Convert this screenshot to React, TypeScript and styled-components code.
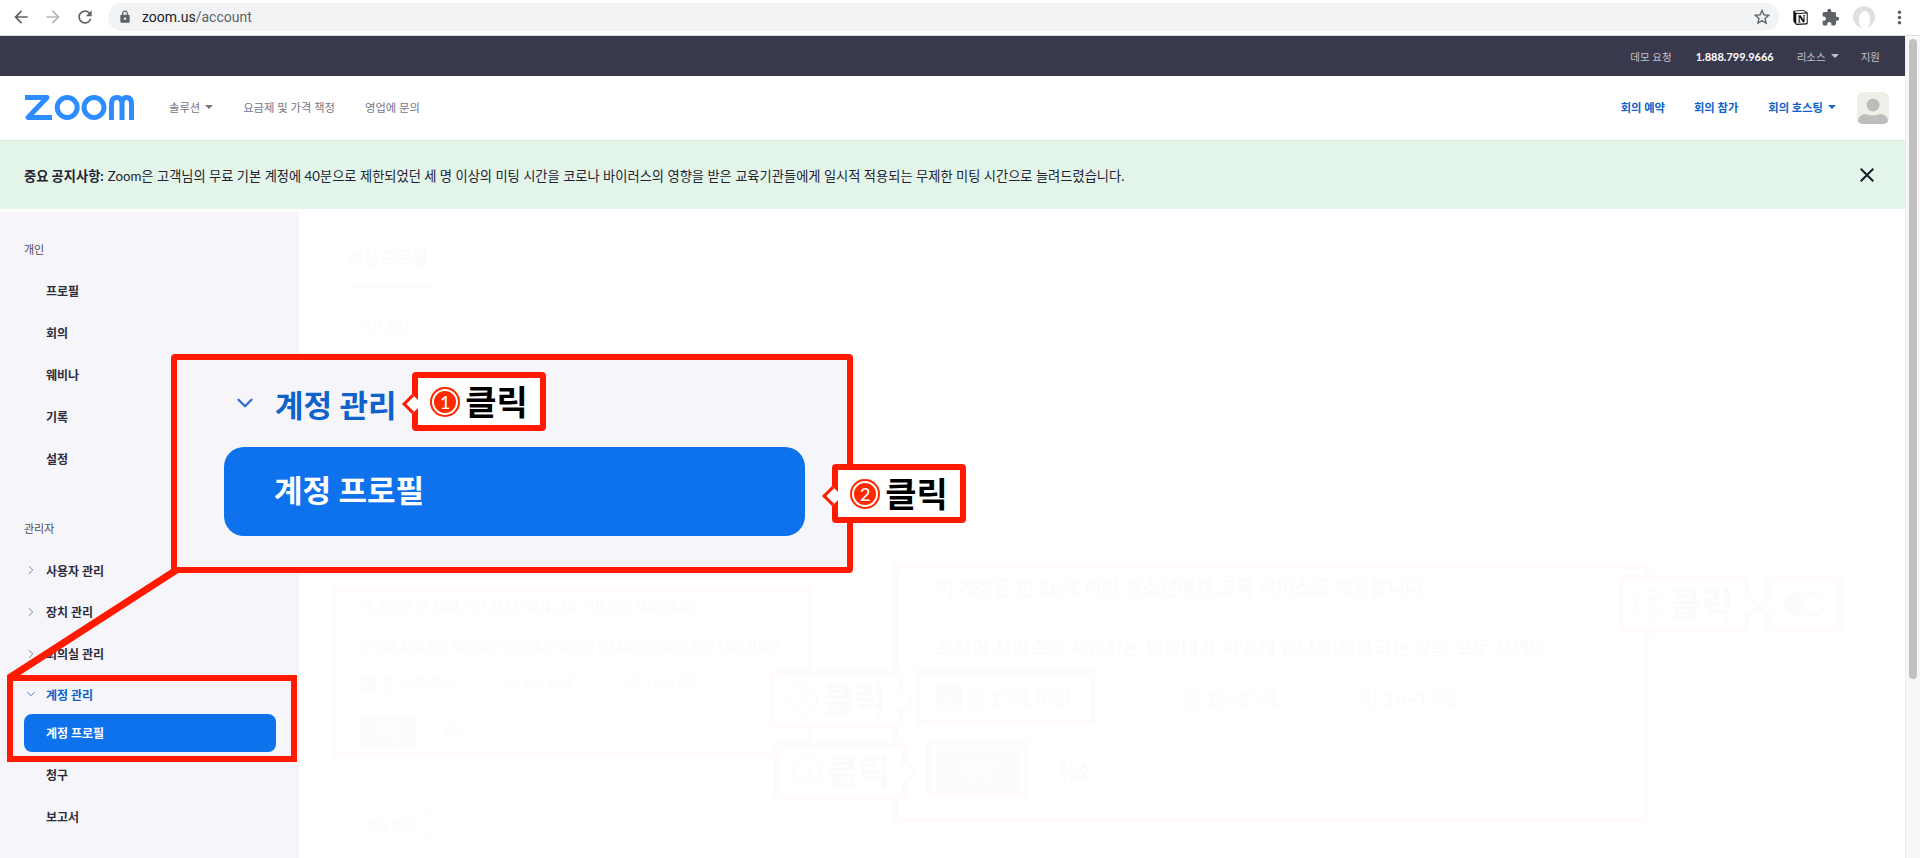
import { ReactNode } from 'react';
import styled, { createGlobalStyle } from 'styled-components';
import {
  MdArrowBack,
  MdArrowForward,
  MdRefresh,
  MdLock,
  MdStarBorder,
  MdExtension,
  MdMoreVert,
  MdClose,
  MdCheck,
} from 'react-icons/md';
import { SiNotion } from 'react-icons/si';
import { ChevronDown, ChevronRight } from 'lucide-react';

const RED = '#ff1a00';
const FADED_RED = '#fffbfa';
const FADED_TEXT = '#fbfbfb';
const FONT = 'Lato, "Noto Sans CJK KR", sans-serif';

const GlobalStyle = createGlobalStyle`
  html, body {
    margin: 0;
    padding: 0;
    background: #fff;
    overflow: hidden;
  }
  * {
    box-sizing: border-box;
  }
`;

const Screen = styled.div`
  position: relative;
  width: 1920px;
  height: 858px;
  overflow: hidden;
  font-family: ${FONT};
  color: #232333;
`;

/* browser chrome */
const BrowserBar = styled.div`
  display: flex;
  align-items: center;
  height: 36px;
  padding: 0 0 1px 11px;
  background: #fff;
  border-bottom: 1px solid #dadce0;
`;

const ToolButton = styled.span<{ $muted?: boolean }>`
  display: flex;
  width: 20px;
  height: 20px;
  margin-right: 12px;
  font-size: 20px;
  color: ${({ $muted }) => ($muted ? '#b4b6b9' : '#5f6368')};
`;

const UrlBar = styled.div`
  flex: 1;
  display: flex;
  align-items: center;
  height: 28px;
  margin-left: 1px;
  padding: 0 7px 0 10px;
  border-radius: 14px;
  background: #f1f3f4;
  font-family: Roboto, sans-serif;
  font-size: 14px;
  color: #5f6368;

  b {
    font-weight: 400;
    color: #202124;
  }
`;

const LockIcon = styled(MdLock)`
  font-size: 14px;
  margin-right: 10px;
  color: #5f6368;
`;

const StarIcon = styled(MdStarBorder)`
  margin-left: auto;
  font-size: 20px;
  color: #5f6368;
`;

const Extensions = styled.div`
  display: flex;
  align-items: center;
  gap: 13px;
  width: 141px;
  padding-left: 14px;
  color: #5f6368;
`;

const NotionIcon = styled(SiNotion)`
  font-size: 15px;
  color: #111;
`;

const PuzzleIcon = styled(MdExtension)`
  font-size: 19px;
`;

const ProfileBubble = styled.span`
  display: flex;
  align-items: flex-end;
  justify-content: center;
  width: 22px;
  height: 22px;
  border-radius: 50%;
  background: #dfe1e0;

  &::after {
    content: '';
    width: 11px;
    height: 17px;
    border-radius: 50% 50% 40% 40%;
    background: #fff;
  }
`;

const DotsIcon = styled(MdMoreVert)`
  margin-left: 1px;
  font-size: 21px;
`;

/* page + scrollbar */
const Window = styled.div`
  display: flex;
  height: 822px;
`;

const Page = styled.div`
  flex: 1;
  min-width: 0;
  display: flex;
  flex-direction: column;
`;

const ScrollTrack = styled.div`
  width: 15px;
  padding: 3px 3px 0 3px;
  background: #f7f7f7;
  border-left: 1px solid #ececec;
`;

const ScrollThumb = styled.div`
  height: 640px;
  border-radius: 5px;
  background: #c1c1c1;
`;

/* zoom header */
const TopBar = styled.div`
  display: flex;
  align-items: center;
  justify-content: flex-end;
  height: 40px;
  padding-right: 25px;
  background: #39394e;
  font-size: 10.5px;
  color: #c3c3cc;
`;

const TopLink = styled.span<{ $strong?: boolean; $gap: number }>`
  display: flex;
  align-items: center;
  margin-left: ${({ $gap }) => $gap}px;
  color: ${({ $strong }) => ($strong ? '#fff' : '#c3c3cc')};
  font-size: ${({ $strong }) => ($strong ? '11px' : '10.5px')};
  font-weight: ${({ $strong }) => ($strong ? 700 : 400)};
`;

const Caret = styled.i`
  display: inline-block;
  margin-left: 5px;
  border-left: 4px solid transparent;
  border-right: 4px solid transparent;
  border-top: 4px solid currentColor;
`;

const NavBar = styled.div`
  display: flex;
  align-items: center;
  height: 65px;
  padding: 0 16px 0 24px;
  background: #fff;
  border-bottom: 1px solid #dde7e0;
`;

const NavLogo = styled.svg`
  width: 110px;
  height: 25px;
  margin-right: 35px;
  margin-bottom: 1px;
`;

const NavLink = styled.span<{ $blue?: boolean; $gap: number }>`
  display: flex;
  align-items: center;
  margin-left: ${({ $gap }) => $gap}px;
  margin-bottom: 2px;
  font-size: ${({ $blue }) => ($blue ? 11.3 : 11.3)}px;
  font-weight: ${({ $blue }) => ($blue ? 700 : 400)};
  color: ${({ $blue }) => ($blue ? '#0e62c9' : '#747487')};
`;

const NavSpacer = styled.div`
  flex: 1;
`;

const Avatar = styled.div`
  display: flex;
  margin-left: 21px;
  width: 32px;
  height: 32px;
  border-radius: 6px;
  overflow: hidden;
  background: #efeee9;
`;

const Banner = styled.div`
  display: flex;
  align-items: center;
  height: 68px;
  padding: 0 26px 0 24px;
  background: #e3f5e9;
  font-size: 13.25px;
  color: #232333;

  strong {
    font-weight: 700;
    margin-right: 4px;
  }
`;

const BannerClose = styled(MdClose)`
  margin-left: auto;
  font-size: 24px;
  color: #1b1b29;
`;

const Body = styled.div`
  flex: 1;
  display: flex;
  min-height: 0;
  padding-top: 3px;
`;

const Sidebar = styled.nav`
  width: 299px;
  padding-top: 16px;
  background: #f6f6fa;
  overflow: hidden;
`;

const GroupLabel = styled.div<{ $top?: number }>`
  display: flex;
  align-items: center;
  height: 42px;
  margin-top: ${({ $top }) => $top ?? 0}px;
  padding-left: 24px;
  font-size: 11px;
  color: #4a4a5a;
`;

const SideItem = styled.div<{ $open?: boolean; $h?: number; $top?: number }>`
  display: flex;
  align-items: center;
  gap: 8px;
  height: ${({ $h }) => $h ?? 41.85}px;
  margin-top: ${({ $top }) => $top ?? 0}px;
  padding-left: 24px;
  font-size: 12px;
  font-weight: 700;
  color: ${({ $open }) => ($open ? '#0e62c9' : '#2c2c3b')};
`;

const ChevronSlot = styled.span<{ $open?: boolean }>`
  display: flex;
  width: 14px;
  color: ${({ $open }) => ($open ? '#2d6fd0' : '#747487')};
`;

const ActiveItem = styled.div`
  display: flex;
  align-items: center;
  width: 252px;
  height: 38px;
  margin-left: 24px;
  padding-left: 22px;
  border-radius: 8px;
  background: #0e72ed;
  font-size: 12px;
  font-weight: 700;
  color: #fff;
`;

/* barely visible page behind the white wash */
const Main = styled.main`
  flex: 1;
  padding: 33px 0 0 49px;
  color: ${FADED_TEXT};
`;

const MainTitle = styled.div`
  width: 84px;
  height: 43px;
  border-bottom: 2px solid ${FADED_TEXT};
  font-size: 16.5px;
  font-weight: 700;
  white-space: nowrap;
`;

const SectionTitle = styled.div`
  margin: 28px 0 0 11px;
  font-size: 13px;
  font-weight: 500;
`;

const CloseAccount = styled.div`
  display: flex;
  align-items: center;
  justify-content: center;
  width: 84px;
  height: 31px;
  margin-top: 474px;
  border: 1px solid #fcfcfd;
  border-radius: 4px;
  font-size: 13px;
`;

/* annotations on top of the page */
const Overlay = styled.div<{ $x: number; $y: number; $w: number; $h: number }>`
  position: absolute;
  left: ${({ $x }) => $x}px;
  top: ${({ $y }) => $y}px;
  width: ${({ $w }) => $w}px;
  height: ${({ $h }) => $h}px;
`;

const Frame = styled(Overlay)<{ $fill?: string; $faded?: boolean; $radius?: number }>`
  border: 6px solid ${({ $faded }) => ($faded ? FADED_RED : RED)};
  border-radius: ${({ $radius }) => $radius ?? 4}px;
  background: ${({ $fill }) => $fill ?? 'transparent'};
`;

const ZoomedBox = styled(Frame)`
  display: flex;
  flex-direction: column;
  padding: 23px 0 0 47px;
`;

const ZoomedHeader = styled.div`
  display: flex;
  align-items: center;
  gap: 17px;
  height: 40px;
  padding-left: 8px;
  font-size: 31px;
  font-weight: 700;
  color: #0e62c9;
`;

const ZoomedChevron = styled(ChevronDown)`
  width: 26px;
  height: 26px;
  color: #2d6fd0;
`;

const ZoomedActive = styled.div`
  display: flex;
  align-items: center;
  width: 581px;
  height: 89px;
  margin: 24px 0 0 0;
  padding: 0 0 7px 50px;
  border-radius: 20px;
  background: #0e72ed;
  font-size: 31px;
  font-weight: 700;
  color: #fff;
`;

const Callout = styled(Frame)<{ $side?: 'left' | 'right' }>`
  display: flex;
  align-items: center;
  justify-content: center;
  gap: 5px;
  background: #fff;
  font-size: 34px;
  font-weight: 700;
  line-height: 1;
  color: ${({ $faded }) => ($faded ? FADED_TEXT : '#000')};

  &::before {
    content: '';
    position: absolute;
    top: 50%;
    ${({ $side }) => ($side === 'right' ? 'right: -13px;' : 'left: -13px;')}
    width: 11px;
    height: 11px;
    margin-top: -5px;
    background: #fff;
    border-style: solid;
    border-color: ${({ $faded }) => ($faded ? FADED_RED : RED)};
    border-width: ${({ $side }) => ($side === 'right' ? '3px 3px 0 0' : '0 0 3px 3px')};
    transform: rotate(45deg);
  }
`;

const StepBadge = styled.span<{ $faded?: boolean }>`
  display: flex;
  align-items: center;
  justify-content: center;
  width: 30px;
  height: 30px;
  border-radius: 50%;
  background: ${({ $faded }) => ($faded ? '#fff' : '#ff2a00')};
  box-shadow: ${({ $faded }) =>
    $faded ? `inset 0 0 0 2px ${FADED_RED}` : 'inset 0 0 0 2px #ff2a00, inset 0 0 0 4px #fff'};
  font-size: 18px;
  font-weight: 500;
  color: ${({ $faded }) => ($faded ? FADED_TEXT : '#fff')};
`;

const ConnectorSvg = styled.svg`
  position: absolute;
  left: 0;
  top: 0;
  pointer-events: none;
`;

const FadedPanel = styled(Frame)<{ $big?: boolean }>`
  display: flex;
  flex-direction: column;
  padding-left: ${({ $big }) => ($big ? 38 : 23)}px;
  font-size: ${({ $big }) => ($big ? 19.3 : 13.3)}px;
  font-weight: 500;
  color: ${FADED_TEXT};
  white-space: nowrap;
`;

const FadedLine = styled.div<{ $h: number; $top: number }>`
  display: flex;
  align-items: center;
  height: ${({ $h }) => $h}px;
  margin-top: ${({ $top }) => $top}px;
`;

const AgeOption = styled.span<{ $w: number }>`
  display: flex;
  align-items: center;
  gap: 6px;
  width: ${({ $w }) => $w}px;
  font-weight: 400;
`;

const AgeBox = styled.span<{ $on?: boolean; $size: number }>`
  display: flex;
  align-items: center;
  justify-content: center;
  width: ${({ $size }) => $size}px;
  height: ${({ $size }) => $size}px;
  border-radius: 3px;
  border: 1px solid #fcfcfd;
  background: ${({ $on }) => ($on ? '#fafcfe' : '#fff')};
  color: #fff;
`;

const SaveRow = styled.div<{ $h: number; $top: number; $gap: number }>`
  display: flex;
  align-items: center;
  gap: ${({ $gap }) => $gap}px;
  height: ${({ $h }) => $h}px;
  margin-top: ${({ $top }) => $top}px;
`;

const SaveButton = styled.span<{ $w: number }>`
  display: flex;
  align-items: center;
  justify-content: center;
  width: ${({ $w }) => $w}px;
  height: 100%;
  border-radius: 4px;
  background: #fbfcfe;
  color: #fff;
`;

const ToggleSwitch = styled.span`
  display: flex;
  align-items: center;
  justify-content: flex-end;
  width: 41px;
  height: 24px;
  padding: 2px;
  border-radius: 12px;
  background: #fbfcfe;

  &::after {
    content: '';
    width: 20px;
    height: 20px;
    border-radius: 50%;
    background: #fff;
  }
`;

const Step = ({ n, faded }: { n: number; faded?: boolean }) => (
  <>
    <StepBadge $faded={faded}>{n}</StepBadge>
    클릭
  </>
);

const sideGroupOne = ['프로필', '회의', '웨비나', '기록', '설정'];

const PlainItem = ({ children, top, h }: { children: ReactNode; top?: number; h?: number }) => (
  <SideItem $top={top} $h={h}>
    <ChevronSlot />
    {children}
  </SideItem>
);

const ClosedItem = ({ children }: { children: string }) => (
  <SideItem>
    <ChevronSlot>
      <ChevronRight size={14} strokeWidth={1.5} />
    </ChevronSlot>
    {children}
  </SideItem>
);

const App = () => {
  return (
    <Screen>
      <GlobalStyle />
      <BrowserBar>
        <ToolButton><MdArrowBack /></ToolButton>
        <ToolButton $muted><MdArrowForward /></ToolButton>
        <ToolButton><MdRefresh /></ToolButton>
        <UrlBar>
          <LockIcon />
          <span><b>zoom.us</b>/account</span>
          <StarIcon />
        </UrlBar>
        <Extensions>
          <NotionIcon />
          <PuzzleIcon />
          <ProfileBubble />
          <DotsIcon />
        </Extensions>
      </BrowserBar>

      <Window>
        <Page>
          <TopBar>
            <TopLink $gap={0}>데모 요청</TopLink>
            <TopLink $gap={24} $strong>1.888.799.9666</TopLink>
            <TopLink $gap={23}>리소스<Caret /></TopLink>
            <TopLink $gap={22}>지원</TopLink>
          </TopBar>

          <NavBar>
            <NavLogo viewBox="0 0 110 25" aria-label="zoom">
              <g fill="none" stroke="#2d8cff" strokeWidth="5">
                <path d="M1 2.6 H23 L4 22.4 H28" strokeLinejoin="round" />
                <circle cx="43.2" cy="12.5" r="10" />
                <circle cx="70" cy="12.5" r="10" />
                <path d="M87.5 25 V9 Q87.5 2.6 93 2.6 Q98 2.6 98 9 V25 M98 9 Q98 2.6 102.5 2.6 Q107.5 2.6 107.5 9 V25" />
              </g>
            </NavLogo>
            <NavLink $gap={0}>솔루션<Caret /></NavLink>
            <NavLink $gap={30}>요금제 및 가격 책정</NavLink>
            <NavLink $gap={30}>영업에 문의</NavLink>
            <NavSpacer />
            <NavLink $gap={0} $blue>회의 예약</NavLink>
            <NavLink $gap={29} $blue>회의 참가</NavLink>
            <NavLink $gap={30} $blue>회의 호스팅<Caret /></NavLink>
            <Avatar>
              <svg viewBox="0 0 32 32" width="32" height="32">
                <circle cx="16" cy="13" r="6.5" fill="#bdbdbd" />
                <path d="M1 32 V29 Q1 23 9 22 Q16 25 23 22 Q31 23 31 29 V32 Z" fill="#bdbdbd" />
              </svg>
            </Avatar>
          </NavBar>

          <Banner>
            <strong>중요 공지사항:</strong>
            Zoom은 고객님의 무료 기본 계정에 40분으로 제한되었던 세 명 이상의 미팅 시간을 코로나 바이러스의 영향을 받은 교육기관들에게 일시적 적용되는 무제한 미팅 시간으로 늘려드렸습니다.
            <BannerClose />
          </Banner>

          <Body>
            <Sidebar>
              <GroupLabel>개인</GroupLabel>
              {sideGroupOne.map(label => (
                <PlainItem key={label}>{label}</PlainItem>
              ))}
              <GroupLabel $top={28}>관리자</GroupLabel>
              <ClosedItem>사용자 관리</ClosedItem>
              <ClosedItem>장치 관리</ClosedItem>
              <ClosedItem>회의실 관리</ClosedItem>
              <SideItem $open $h={39}>
                <ChevronSlot $open>
                  <ChevronDown size={14} strokeWidth={1.5} />
                </ChevronSlot>
                계정 관리
              </SideItem>
              <ActiveItem>계정 프로필</ActiveItem>
              <PlainItem top={2}>청구</PlainItem>
              <PlainItem>보고서</PlainItem>
              <PlainItem top={5}>계정 설정</PlainItem>
            </Sidebar>

            <Main>
              <MainTitle>계정 프로필</MainTitle>
              <SectionTitle>기본 정보</SectionTitle>
              <CloseAccount>계정 해지</CloseAccount>
            </Main>
          </Body>
        </Page>

        <ScrollTrack>
          <ScrollThumb />
        </ScrollTrack>
      </Window>

      {/* faded annotations left over under the white wash */}
      <FadedPanel $faded $x={331} $y={586} $w={482} $h={172}>
        <FadedLine $h={24} $top={1}>이 계정은 만 16세 미만 청소년에게 교육 서비스를 제공합니다</FadedLine>
        <FadedLine $h={24} $top={17}>조직이 서비스를 제공하는 연령대가 어떻게 됩니까(적용되는 항목 모두 선택)?</FadedLine>
        <FadedLine $h={24} $top={12}>
          <AgeOption $w={126}><AgeBox $on $size={16}><MdCheck size={12} /></AgeBox>만 13세 미만</AgeOption>
          <AgeOption $w={122}><AgeBox $size={15} />만 13~15세</AgeOption>
          <AgeOption $w={100}><AgeBox $size={15} />만 16~17세</AgeOption>
        </FadedLine>
        <SaveRow $h={32} $top={20} $gap={26}>
          <SaveButton $w={57}>저장</SaveButton>
          취소
        </SaveRow>
      </FadedPanel>

      <FadedPanel $faded $big $x={892} $y={563} $w={757} $h={260}>
        <FadedLine $h={36} $top={0}>이 계정은 만 18세 미만 청소년에게 교육 서비스를 제공합니다</FadedLine>
        <FadedLine $h={36} $top={24}>조직이 서비스를 제공하는 연령대가 어떻게 됩니까(적용되는 항목 모두 선택)?</FadedLine>
        <FadedLine $h={36} $top={15}>
          <AgeOption $w={219}><AgeBox $on $size={26}><MdCheck size={20} /></AgeBox>만 13세 미만</AgeOption>
          <AgeOption $w={178}><AgeBox $size={22} />만 13~15세</AgeOption>
          <AgeOption $w={140}><AgeBox $size={22} />만 16~17세</AgeOption>
        </FadedLine>
        <SaveRow $h={45} $top={31} $gap={37}>
          <SaveButton $w={84}>저장</SaveButton>
          취소
        </SaveRow>
      </FadedPanel>

      <Frame $faded $x={915} $y={668} $w={181} $h={58} />
      <Frame $faded $x={926} $y={740} $w={103} $h={58} />
      <Callout $faded $side="right" $x={769} $y={670} $w={135} $h={58}><Step n={4} faded /></Callout>
      <Callout $faded $side="right" $x={774} $y={742} $w={134} $h={58}><Step n={3} faded /></Callout>
      <Callout $faded $side="right" $x={1618} $y={575} $w={132} $h={58}><Step n={5} faded /></Callout>
      <Callout $faded $x={1765} $y={575} $w={78} $h={58} $radius={0}><ToggleSwitch /></Callout>

      {/* main red annotation */}
      <ConnectorSvg width="300" height="700">
        <line x1="178" y1="569" x2="9" y2="678" stroke={RED} strokeWidth="7" />
      </ConnectorSvg>

      <Frame $x={7} $y={675} $w={290} $h={87} $radius={0} />

      <ZoomedBox $x={171} $y={354} $w={682} $h={219} $fill="#f6f6fa">
        <ZoomedHeader>
          <ZoomedChevron strokeWidth={2.25} />
          계정 관리
        </ZoomedHeader>
        <ZoomedActive>계정 프로필</ZoomedActive>
      </ZoomedBox>

      <Callout $x={412} $y={372} $w={134} $h={59}><Step n={1} /></Callout>
      <Callout $x={832} $y={464} $w={134} $h={59}><Step n={2} /></Callout>
    </Screen>
  );
};

export default App;
